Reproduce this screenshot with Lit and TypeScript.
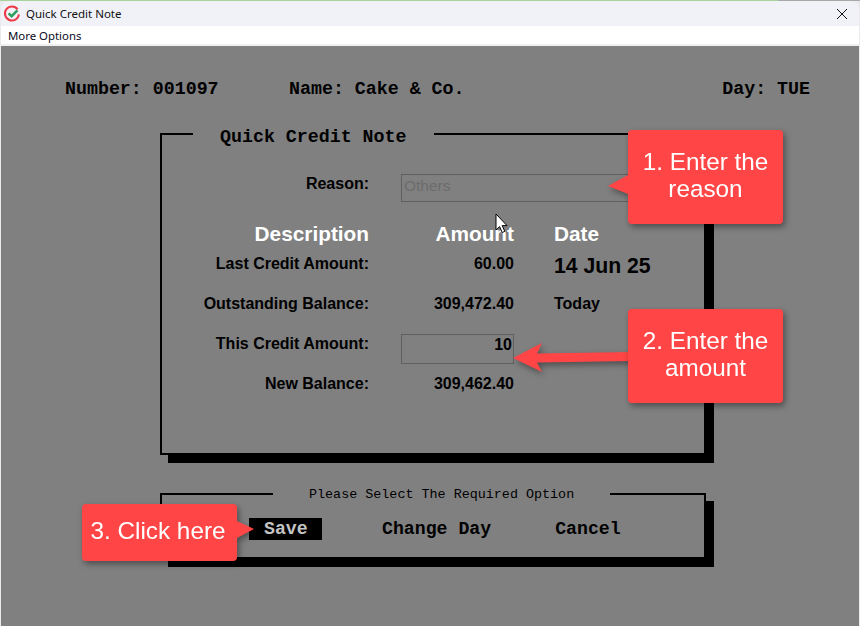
import { LitElement, html, css } from "lit";
import { customElement } from "lit/decorators.js";

@customElement("app-root")
export class AppRoot extends LitElement {
  static styles = css`
    :host {
      display: block;
      position: relative;
      width: 860px;
      height: 626px;
      overflow: hidden;
      background: #e9e9ee;
      font-family: "Liberation Sans", Arial, sans-serif;
    }
    .edge {
      height: 1px;
      background: linear-gradient(to right, #a9d29c 0, #a9d29c 778px, #a8a8a8 778px, #a8a8a8 100%);
    }
    .window {
      display: flex;
      flex-direction: column;
      height: 625px;
      margin: 0 1px;
      border-radius: 8px 8px 0 0;
      overflow: hidden;
    }
    .titlebar {
      display: flex;
      align-items: center;
      height: 25px;
      flex: none;
      padding: 0 3px 0 2px;
      background: #f0f2f8;
      font-family: "Noto Sans", sans-serif;
      font-size: 11.5px;
      color: #111;
    }
    .titlebar .logo {
      width: 18px;
      height: 18px;
      margin-right: 5px;
    }
    .titlebar .name {
      flex: 1;
    }
    .titlebar .close {
      width: 12px;
      height: 12px;
      margin-right: 8px;
    }
    .menu {
      flex: none;
      height: 18px;
      line-height: 20px;
      padding-left: 7px;
      background: #fff;
      border-bottom: 2px solid #f0f0f0;
      font-family: "Noto Sans", sans-serif;
      font-size: 11.4px;
      color: #0a0a1e;
    }
    .stage {
      flex: 1;
      background: #808080;
      padding: 33px 49px 0 64px;
      color: #000;
    }
    .mono {
      font-family: "Liberation Mono", "Courier New", monospace;
      font-weight: 700;
      font-size: 18.3px;
      line-height: 20px;
    }
    .head {
      display: grid;
      grid-template-columns: 224px 1fr auto;
    }
    .frame {
      box-sizing: border-box;
      width: 546px;
      margin-left: 95px;
      border: 2px solid #000;
      box-shadow: 8px 8px 0 #000;
    }
    .frame.main {
      height: 322px;
      margin-top: 34px;
    }
    .frame.options {
      height: 66px;
      margin-top: 38px;
    }
    .legend {
      width: fit-content;
      background: #808080;
    }
    .main .legend {
      margin: -8px 0 0 31px;
      padding: 0 27px;
    }
    .options .legend {
      margin: -8px 0 0 111px;
      padding: 0 36px;
      font-size: 13.4px;
      font-weight: 400;
      line-height: 16px;
    }
    .form {
      display: grid;
      grid-template-columns: 207px 113px auto;
      grid-template-rows: 48px 32px repeat(4, 40px);
      column-gap: 32px;
      align-items: start;
      margin-top: 27px;
      font-size: 16px;
      font-weight: 700;
      line-height: 20px;
    }
    .r {
      text-align: right;
    }
    .date {
      margin-left: 8px;
    }
    .hd {
      color: #fff;
      font-size: 20.8px;
      line-height: 24px;
    }
    .big {
      font-size: 21.2px;
      line-height: 24px;
    }
    .input {
      box-sizing: border-box;
      border: 1px solid #606060;
    }
    .input.reason {
      width: 229px;
      height: 28px;
      padding: 0 2px;
      line-height: 22px;
      font-size: 15.5px;
      font-weight: 400;
      color: #6c6c6c;
    }
    .input.amount {
      height: 30px;
      padding-right: 1px;
      text-align: right;
      line-height: 20px;
    }
    .buttons {
      display: flex;
      margin: 15px 0 0 87px;
      font-size: 18.2px;
      line-height: 22px;
    }
    .btn.save {
      width: 58px;
      padding-left: 15px;
      background: #000;
      color: #c4c4c4;
      margin-right: 60px;
    }
    .btn.change {
      margin-right: 64px;
    }
    .callout {
      position: absolute;
      box-sizing: border-box;
      display: flex;
      align-items: center;
      justify-content: center;
      text-align: center;
      width: 155px;
      padding-bottom: 4px;
      background: #ff4545;
      border-radius: 4px;
      color: #fff;
      font-size: 24.3px;
      line-height: 27px;
    }
    .shadowed {
      filter: drop-shadow(2px 3px 3px rgba(0, 0, 0, 0.4));
    }
    .callout::before {
      content: "";
      position: absolute;
      background: #ff4545;
    }
    .c1 {
      left: 628px;
      top: 130px;
      height: 94px;
    }
    .c1::before {
      left: -20px;
      top: 45px;
      width: 20px;
      height: 19px;
      clip-path: polygon(100% 0, 0 58%, 100% 100%);
    }
    .c2 {
      left: 628px;
      top: 309px;
      height: 94px;
    }
    .c2::before {
      display: none;
    }
    .c3 {
      left: 82px;
      top: 504px;
      height: 57px;
      padding-right: 3px;
    }
    .c3::before {
      right: -17px;
      top: 17px;
      width: 17px;
      height: 17px;
      clip-path: polygon(0 0, 100% 47%, 0 100%);
    }
    .arrow {
      position: absolute;
      left: 505px;
      top: 335px;
      width: 130px;
      height: 45px;
    }
    .cursor {
      position: absolute;
      left: 495px;
      top: 213px;
      width: 13px;
      height: 21px;
    }
  `;

  render() {
    return html`
      <div class="edge"></div>
      <div class="window">
        <div class="titlebar">
          <svg class="logo" viewBox="0 0 18 18">
            <path d="M14.6 4.4A7 7 0 1 0 15.9 9.4" fill="none" stroke="#ee3a48" stroke-width="2"></path>
            <path d="M5.6 8.4 8.6 11.2 14.4 5.4" fill="none" stroke="#2f9e5e" stroke-width="2.6"></path>
          </svg>
          <span class="name">Quick Credit Note</span>
          <svg class="close" viewBox="0 0 12 12">
            <path d="M1 1 11 11M11 1 1 11" stroke="#111" stroke-width="1"></path>
          </svg>
        </div>
        <div class="menu">More Options</div>
        <div class="stage">
          <div class="head mono">
            <span>Number: 001097</span>
            <span>Name: Cake &amp; Co.</span>
            <span>Day: TUE</span>
          </div>
          <section class="frame main">
            <div class="legend mono">Quick Credit Note</div>
            <div class="form">
              <div class="r">Reason:</div>
              <div class="input reason">Others</div>
              <div></div>
              <div class="r hd">Description</div>
              <div class="r hd">Amount</div>
              <div class="hd date">Date</div>
              <div class="r">Last Credit Amount:</div>
              <div class="r">60.00</div>
              <div class="big date">14 Jun 25</div>
              <div class="r">Outstanding Balance:</div>
              <div class="r">309,472.40</div>
              <div class="date">Today</div>
              <div class="r">This Credit Amount:</div>
              <div class="input amount">10</div>
              <div></div>
              <div class="r">New Balance:</div>
              <div class="r">309,462.40</div>
              <div></div>
            </div>
          </section>
          <section class="frame options">
            <div class="legend mono">Please Select The Required Option</div>
            <div class="buttons mono">
              <span class="btn save">Save</span>
              <span class="btn change">Change Day</span>
              <span class="btn">Cancel</span>
            </div>
          </section>
        </div>
      </div>
      <svg class="cursor" viewBox="0 0 13 21">
        <path d="M1 1V17L4.6 13.6 7.2 19.5 9.8 18.4 7.2 12.6H12Z" fill="#fff" stroke="#000" stroke-width="1"></path>
      </svg>
      <svg class="arrow shadowed" viewBox="505 335 130 45">
        <polygon points="513,358 542,343 537,353.5 632,352 632,361 537,362.5 542,372" fill="#ff4545"></polygon>
      </svg>
      <div class="callout shadowed c1">1. Enter the<br />reason</div>
      <div class="callout shadowed c2">2. Enter the<br />amount</div>
      <div class="callout shadowed c3">3. Click here</div>
    `;
  }
}
